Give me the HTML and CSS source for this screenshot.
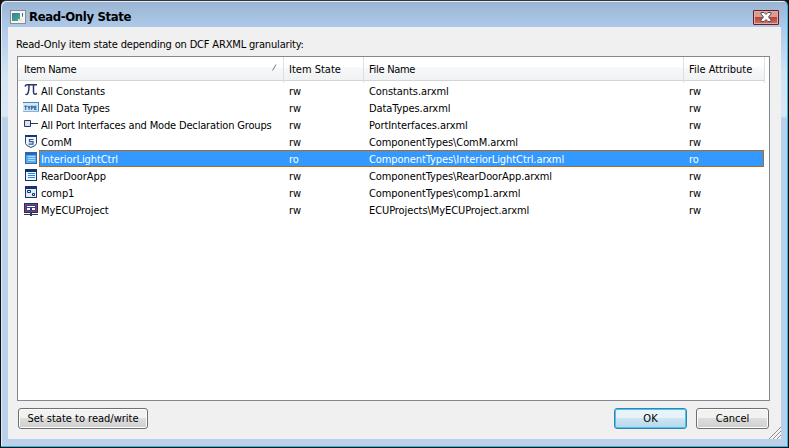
FILE: index.html
```
<!DOCTYPE html>
<html lang="en">
<head>
<meta charset="utf-8">
<title>Read-Only State</title>
<link rel="stylesheet" href="styles.css">
</head>
<body>
<main class="window">
  <header class="titlebar">
    <svg class="app-icon" width="16" height="14" viewBox="0 0 16 14"><defs><linearGradient id="app" x2="1" y2="1"><stop stop-color="#347baf"/><stop offset="1" stop-color="#4caf7c"/></linearGradient></defs><path fill="#8c8c88" d="M0 0h16v14H0z"/><path fill="#f5f5f5" d="M1 1h14v12H1z"/><path fill="url(#app)" d="M2 3h8v8H2z"/><path fill="#dfe3e6" d="M8 9h4v2H8z"/><path fill="#2670bd" d="M12 3h1v3h-1z"/><path fill="#58ad65" d="M12 6h1v1h-1z"/></svg>
    <h1>Read-Only State</h1>
    <button class="close" aria-label="Close"><svg width="12" height="10" viewBox="0 0 12 10"><path d="M1 .5h3l2 2 2-2h3v1.500L8.500 5 11 8v1.500H8l-2-2-2 2H1V8l2.500-3L1 2z" fill="#fff" stroke="#4d5261"/></svg></button>
  </header>
  <section class="client">
    <p class="caption">Read-Only item state depending on DCF ARXML granularity:</p>
    <div class="list">
      <div class="head"><span class="tight">Item Name<svg class="sort" width="6" height="7" viewBox="0 0 6 7"><path d="M.5 6.5L4 .5" stroke="#777" fill="none"/></svg></span><span>Item State</span><span class="tight">File Name</span><span>File Attribute</span></div>
      <div class="row">
        <svg class="icon" width="16" height="16" viewBox="0 0 16 16"><path fill="none" stroke="#2b3568" stroke-width="1.5" d="M2 4.500Q2.500 2.800 4.500 2.800H14M6 3Q6 10 4.500 12Q3.500 13 2.500 12M10.500 3V10Q10.500 13.500 14 11.500"/></svg>
        <div class="cells"><span>All Constants</span><span>rw</span><span>Constants.arxml</span><span>rw</span></div>
      </div>
      <div class="row">
        <svg class="icon" width="16" height="16" viewBox="0 0 16 16"><path fill="#d3e8f8" d="M0 3h16v10H0z"/><path fill="#3f8ac8" d="M0 3h16v1H0zM15 3h1v10h-1z"/><path fill="#78b9e2" d="M0 12h16v1H0z"/><text class="type" x="1" y="10.500" textLength="13" lengthAdjust="spacingAndGlyphs">TYPE</text></svg>
        <div class="cells"><span>All Data Types</span><span>rw</span><span>DataTypes.arxml</span><span>rw</span></div>
      </div>
      <div class="row">
        <svg class="icon" width="16" height="16" viewBox="0 0 16 16"><path fill="#dde1ed" stroke="#2b3568" d="M1.500 4.500h6v6h-6z"/><path fill="#2b3568" d="M8 7h7v1H8z"/></svg>
        <div class="cells"><span class="ports">All Port Interfaces and Mode Declaration Groups</span><span>rw</span><span>PortInterfaces.arxml</span><span>rw</span></div>
      </div>
      <div class="row">
        <svg class="icon" width="16" height="16" viewBox="0 0 16 16"><path fill="#eff6fc" stroke="#254a83" d="M2.500 2.500h11v8q0 2-5.500 4q-5.500-2-5.500-4z"/><path fill="#1c376f" d="M2 2h12v2H2z"/><path fill="none" stroke="#30578e" stroke-width="1.200" d="M10.500 6.500h-4v2.200h3.500v2.500H5.500"/></svg>
        <div class="cells"><span>ComM</span><span>rw</span><span>ComponentTypes\ComM.arxml</span><span>rw</span></div>
      </div>
      <div class="row selected">
        <svg class="icon" width="16" height="16" viewBox="0 0 16 16"><path fill="#2867b4" d="M2 2h12v12H2z"/><path fill="#5ba9ed" d="M3 5h10v8H3z"/><path fill="#a7ddff" d="M5 6h7v1H5zM5 8h7v1H5zM5 10h7v1H5z"/></svg>
        <div class="cells"><span>InteriorLightCtrl</span><span>ro</span><span>ComponentTypes\InteriorLightCtrl.arxml</span><span>ro</span></div>
      </div>
      <div class="row">
        <svg class="icon" width="16" height="16" viewBox="0 0 16 16"><path fill="#162f70" d="M2 2h12v12H2z"/><path fill="#e9f6ff" d="M3 5h10v8H3z"/><path fill="#238be0" d="M5 6h7v1H5zM5 8h7v1H5zM5 10h7v1H5z"/></svg>
        <div class="cells"><span>RearDoorApp</span><span>rw</span><span>ComponentTypes\RearDoorApp.arxml</span><span>rw</span></div>
      </div>
      <div class="row">
        <svg class="icon" width="16" height="16" viewBox="0 0 16 16"><path fill="#183370" d="M2 2h12v12H2z"/><path fill="#dfedf9" d="M3 5h10v8H3z"/><path fill="none" stroke="#183370" d="M4.500 6.500h3v2h-3zM9.500 9.500h2v2h-2z"/></svg>
        <div class="cells"><span>comp1</span><span>rw</span><span>ComponentTypes\comp1.arxml</span><span>rw</span></div>
      </div>
      <div class="row">
        <svg class="icon" width="16" height="16" viewBox="0 0 16 16"><path fill="#17346d" d="M1 2h14v10H1z"/><path fill="#be2945" d="M2 3h12v8H2z"/><path fill="#184b9a" d="M3 4h10v6H3z"/><path fill="#fff" d="M4 5h8v1H4zM4 7h3v2H4zM9 7h3v2H9z"/><path fill="#343b50" d="M7 12h2v1h6v1H9v1H7v-1H1v-1h6z"/></svg>
        <div class="cells"><span>MyECUProject</span><span>rw</span><span>ECUProjects\MyECUProject.arxml</span><span>rw</span></div>
      </div>
    </div>
    <footer class="footer"><button class="button set">Set state to read/write</button><button class="button ok">OK</button><button class="button cancel">Cancel</button></footer>
    <svg class="grip" width="12" height="12" viewBox="0 0 12 12"><path stroke="#fff" fill="none" d="M1 12L12 1M5 12l7-7M9 12l3-3"/><path stroke="#8b8b8b" fill="none" d="M0 12L12 0M4 12l8-8M8 12l4-4"/></svg>
  </section>
</main>
</body>
</html>
```

FILE: styles.css
```
* { box-sizing: border-box; }
body { margin: 0; background: #111; color: #000; font: 11px/17px "DejaVu Sans Condensed", "DejaVu Sans", sans-serif; }
.window { width: 789px; height: 448px; padding: 0 7px 7px; border: 1px solid #111; border-top-color: #34363c; border-radius: 6px 6px 0 0; background: linear-gradient(#9ab5d2, #aecaeb 27px, #d4e4f5 75px, #dae7f5 115px, #b9d1ea 117px); box-shadow: inset 0 -1px #2fb9dc, inset 1px 1px #e1eefa, inset -1px 0 #2fb9dc; }
.titlebar { display: flex; align-items: center; height: 26px; padding: 6px 2px 0 2px; }
.titlebar h1 { margin: 0 auto 0 3px; font-size: 13px; line-height: 18px; letter-spacing: -.36px; }
.close { display: grid; place-items: center; width: 26px; height: 15px; padding: 0; border: 1px solid #651f24; border-radius: 1px; box-shadow: inset 0 0 0 1px #e6aaa4; background: linear-gradient(#dc9b91 45%, #b84436 50%, #cd7467); }
.client { position: relative; height: 412px; padding: 9px 11px 0 9px; background: #f0f0f0; }
.caption { height: 20px; margin: 0 0 0 -1px; letter-spacing: -.17px; }
.list { height: 345px; border: 1px solid #828790; background: #fff; }
.head, .cells { display: grid; grid-template-columns: 243px 80px 320px 80px; }
.head { width: 747px; height: 24px; margin-bottom: 1px; padding-left: 2px; line-height: 26px; border-bottom: 1px solid #d5d5d5; background: linear-gradient(#fff 45%, #f7f8fa 46%, #f1f2f4); grid-template-columns: 264px 80px 320px 81px; }
.head span { position: relative; padding-left: 5px; border-right: 1px solid #dedfe1; }
.head span:first-child { padding-left: 4px; }
.head .tight { letter-spacing: -.3px; }
.sort { position: absolute; right: 5px; top: 7px; }
.row { display: flex; height: 17px; padding-left: 5px; }
.icon { flex: none; }
.cells { width: 725px; height: 17px; border: 1px solid transparent; white-space: nowrap; }
.cells span { padding: 0 0 0 6px; line-height: 17px; letter-spacing: -.08px; }
.cells span:first-child { padding-left: 1px; }
.cells .ports { letter-spacing: -.16px; }
.selected .cells { color: #fff; background: linear-gradient(#3399ff, #3399ff) padding-box, repeating-conic-gradient(#d86600 0 25%, #8c6b45 0 50%) 0 0 / 2px 2px border-box; }
.type { font: bold 6px "DejaVu Sans Condensed", sans-serif; fill: #204a80; }
.footer { display: flex; height: 22px; margin: 7px 1px 0; }
.button { height: 21px; padding: 0; border: 1px solid #707070; border-radius: 3px; box-shadow: inset 0 0 0 1px #fcfcfc; background: linear-gradient(#f2f2f2 48%, #dddddd 50%, #cfcfcf); font: inherit; }
.set { width: 130px; margin-right: auto; }
.ok { width: 73px; margin-right: 9px; border-color: #3c7fb1; background: linear-gradient(#e7f3f9 48%, #cee5f2 50%, #bad6e7); box-shadow: inset 0 0 0 1px #3ec9f5; }
.cancel { width: 73px; }
.grip { position: absolute; right: 0; bottom: 0; }
```
